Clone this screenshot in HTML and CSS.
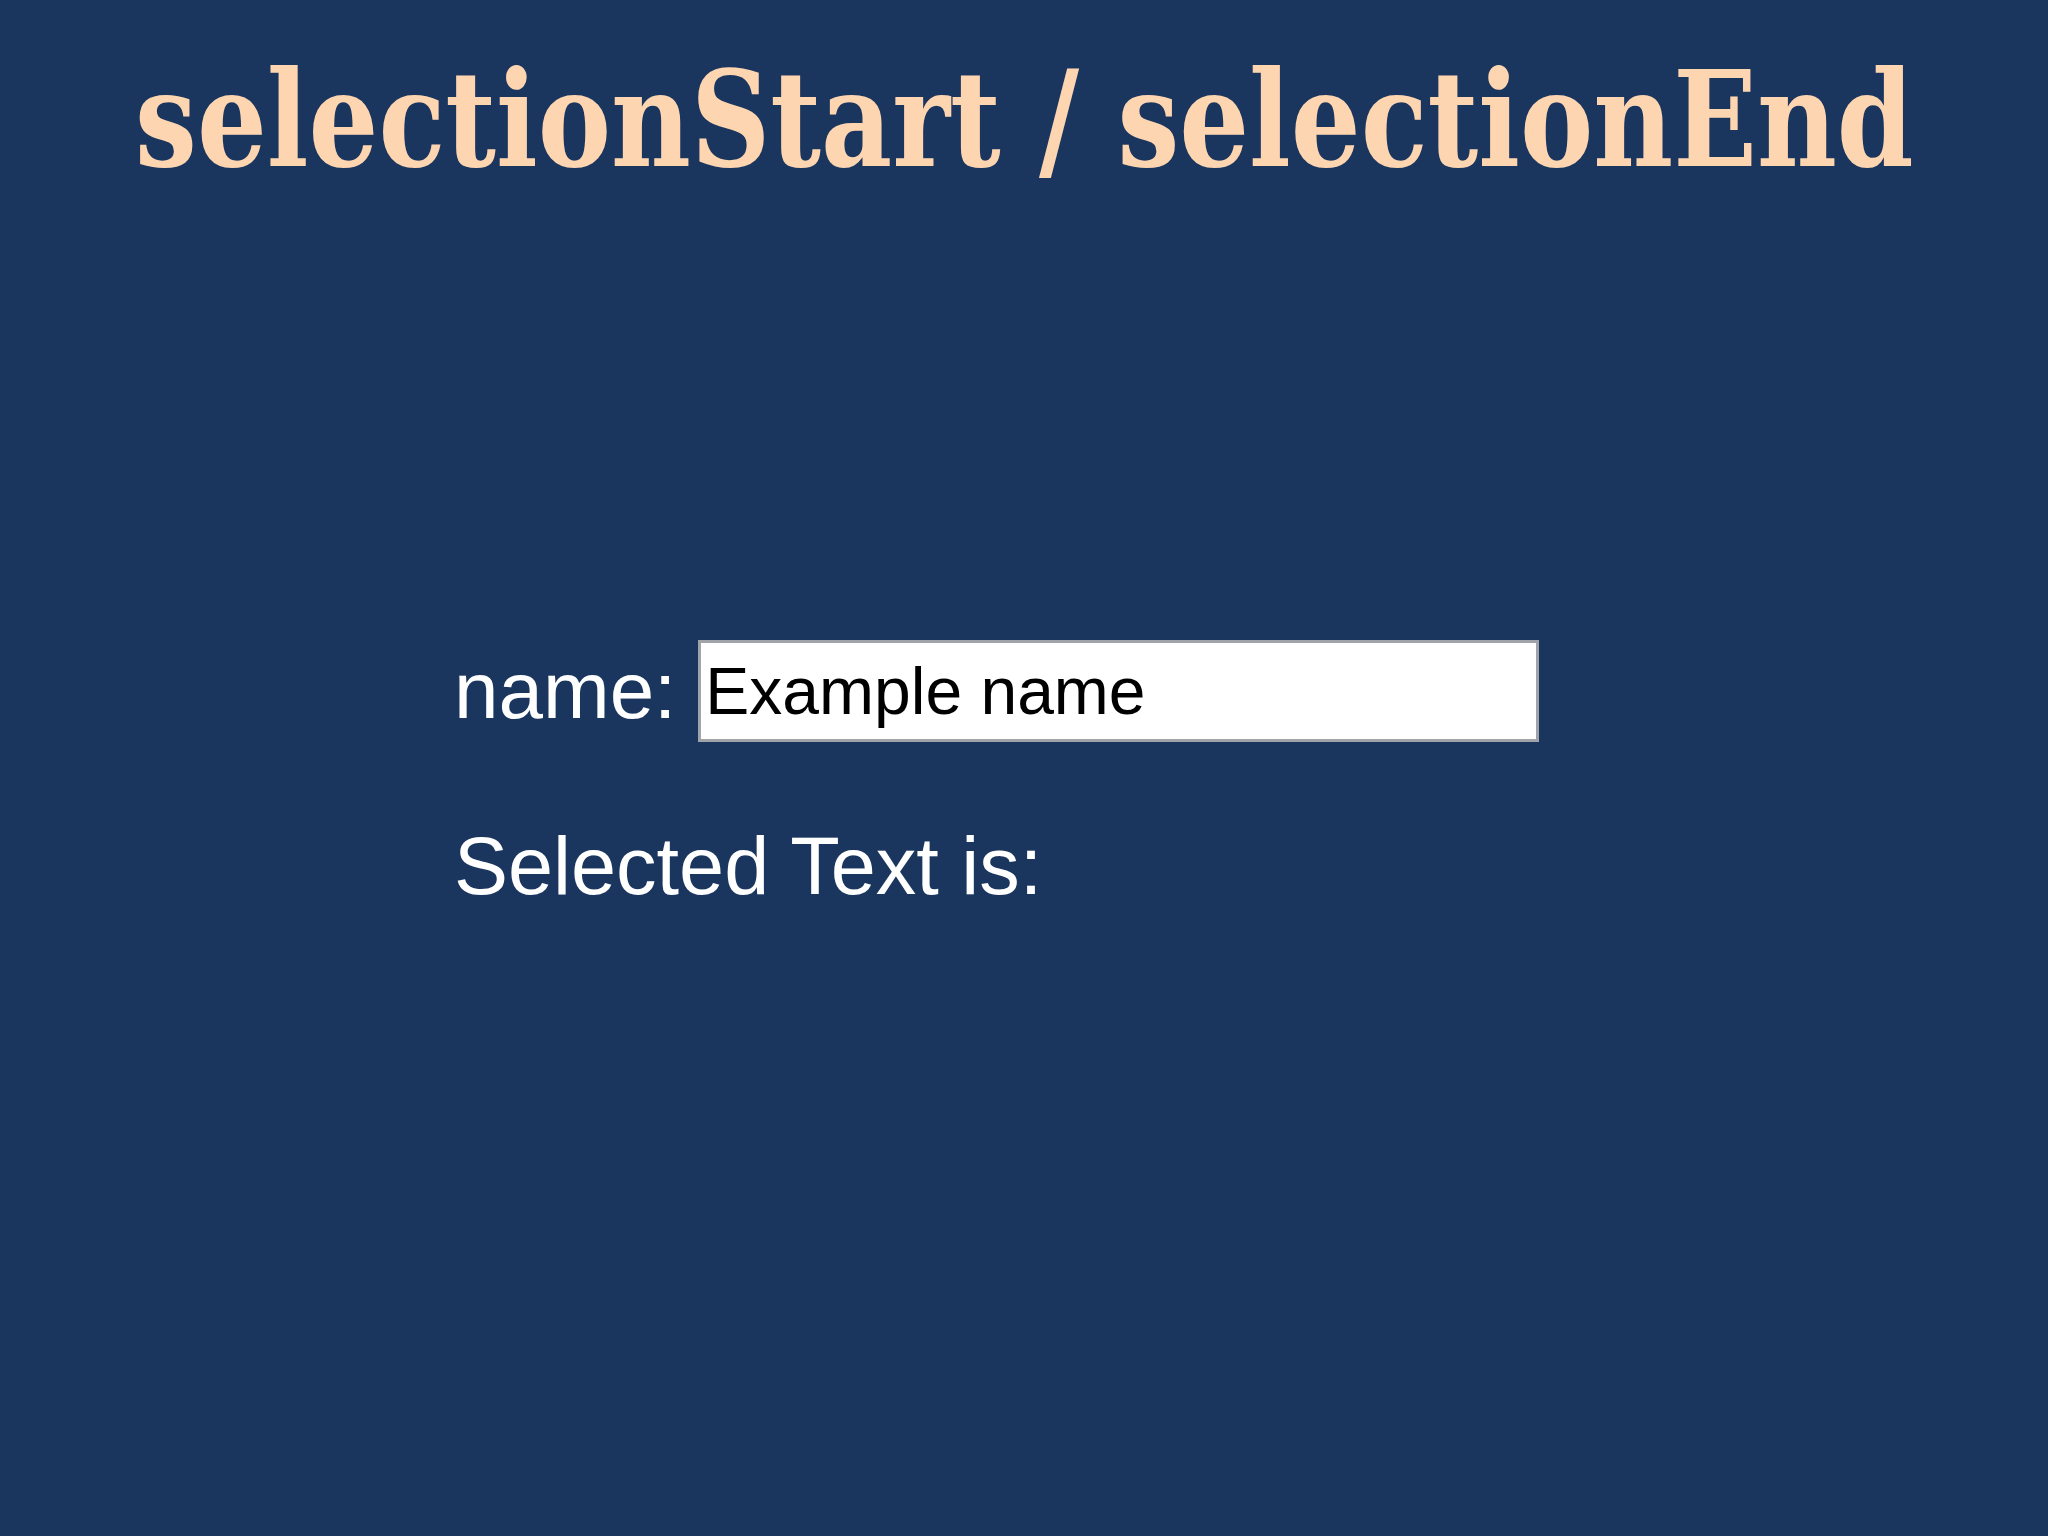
FILE: index.html
```html
<!DOCTYPE html>
<html>
<head>
<meta charset="utf-8">
<title>selectionStart / selectionEnd</title>
<link rel="stylesheet" href="styles.css">
</head>
<body>
<header class="slide-head">
  <h1 class="slide-title">selectionStart / selectionEnd</h1>
</header>
<main class="demo">
  <div class="field-row">
    <label class="field-label" for="name">name:</label>
    <input class="field-input" id="name" type="text" value="Example name">
  </div>
  <p class="result">Selected Text is:</p>
</main>
</body>
</html>
```
FILE: styles.css
```css
html, body {
  margin: 0;
  padding: 0;
}
body {
  width: 2048px;
  height: 1536px;
  background: #1b365e;
  overflow: hidden;
}
.slide-head {
  display: flex;
  justify-content: center;
  padding-top: 54px;
}
.slide-title {
  margin: 0;
  font-family: "DejaVu Serif Condensed", "DejaVu Serif", serif;
  font-stretch: condensed;
  font-weight: bold;
  font-size: 132px;
  line-height: 1;
  color: #fdd5b0;
  white-space: nowrap;
  transform: scaleX(0.925);
  transform-origin: center;
}
.demo {
  display: flex;
  flex-direction: column;
  padding-left: 454px;
  padding-top: 454px;
  gap: 78px;
  font-family: "Liberation Sans", Arial, sans-serif;
}
.field-row {
  display: flex;
  align-items: center;
  gap: 22px;
}
.field-label {
  font-size: 80px;
  color: #ffffff;
}
.field-input {
  box-sizing: border-box;
  width: 841px;
  height: 102px;
  margin: 0;
  padding: 0 4px;
  border: 3px solid #a0a4a8;
  background: #ffffff;
  font-family: "Liberation Sans", Arial, sans-serif;
  font-size: 66px;
  color: #000000;
  outline: none;
}
.result {
  margin: 0;
  font-size: 81px;
  color: #ffffff;
}
```
